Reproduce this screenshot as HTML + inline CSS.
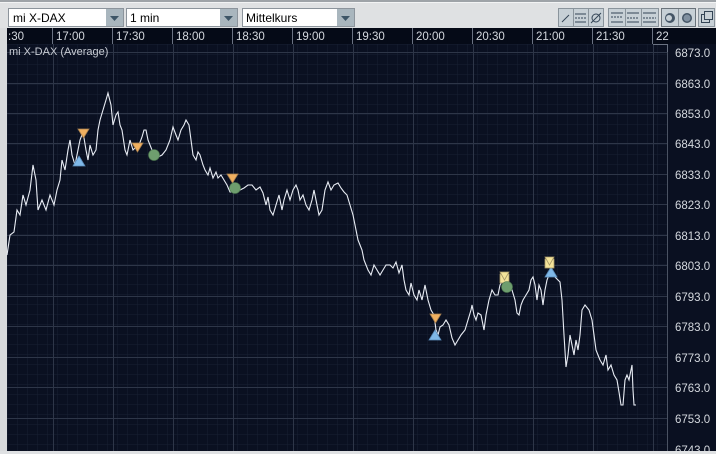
<!DOCTYPE html>
<html><head><meta charset="utf-8"><style>
html,body{margin:0;padding:0;background:#dfe1e3;}
svg{display:block}
text{font-family:"Liberation Sans",sans-serif;}
</style></head><body>
<svg width="716" height="454" viewBox="0 0 716 454" xmlns="http://www.w3.org/2000/svg">
<defs>
<pattern id="minor" x="7" y="44" width="10" height="10" patternUnits="userSpaceOnUse">
<path d="M0 0H10M0 0V10" stroke="#182033" stroke-width="1" fill="none"/>
</pattern>
</defs>
<rect width="716" height="454" fill="#dfe1e3"/>
<rect x="0" y="0" width="716" height="2" fill="#9ea3a8"/>
<rect x="0" y="2" width="716" height="1" fill="#f2f3f4"/>
<g font-size="12" fill="#000">
<rect x="8.5" y="8.5" width="115" height="18" fill="#fff" stroke="#8c949c"/>
<rect x="106" y="9" width="17" height="17" fill="#a9b6be"/>
<path d="M110 16h9l-4.5 5z" fill="#3d5566"/>
<text x="13" y="22">mi X-DAX</text>
<rect x="126.5" y="8.5" width="111" height="18" fill="#fff" stroke="#8c949c"/>
<rect x="220" y="9" width="17" height="17" fill="#a9b6be"/>
<path d="M224 16h9l-4.5 5z" fill="#3d5566"/>
<text x="130" y="22">1 min</text>
<rect x="242.5" y="8.5" width="112" height="18" fill="#fff" stroke="#8c949c"/>
<rect x="337" y="9" width="17" height="17" fill="#a9b6be"/>
<path d="M341 16h9l-4.5 5z" fill="#3d5566"/>
<text x="246" y="22">Mittelkurs</text>
</g>
<g stroke="#8a949c" fill="#c7d0d6">
<rect x="558.5" y="8.5" width="45" height="18"/>
<rect x="608.5" y="8.5" width="50" height="18"/>
<rect x="661.5" y="8.5" width="34" height="18" stroke="#6a737b"/>
<rect x="698.5" y="8.5" width="16" height="18"/>
</g>
<g stroke="#8a949c"><path d="M573.5 9v17M588.5 9v17M625.5 9v17M641.5 9v17M678.5 9v17"/></g>
<g stroke="#334455" fill="none" stroke-width="1">
<path d="M562 22l7-7"/>
<path d="M575 14h11M575 22h11"/><path d="M575 18h11" stroke-dasharray="2 1"/>
<circle cx="596" cy="18" r="4"/><path d="M591 23l10-10"/>
<path d="M611 13h12M611 22h12"/><path d="M611 17h12" stroke-dasharray="2 1"/>
<path d="M627 13h12M627 22h12" /><path d="M627 18h12" stroke-dasharray="2 1"/>
<path d="M643 13h13M643 22h13"/><path d="M643 18h13" stroke-dasharray="2 1"/>
</g>
<circle cx="670" cy="18" r="5" fill="#445566"/><circle cx="669" cy="18" r="3" fill="#c7d0d6"/>
<circle cx="687" cy="18" r="5" fill="#445566"/><circle cx="687" cy="18" r="3.5" fill="#8090a0"/>
<rect x="701.5" y="14.5" width="8" height="8" fill="#c7d0d6" stroke="#334455"/>
<rect x="704.5" y="11.5" width="8" height="8" fill="#c7d0d6" stroke="#334455"/>
<rect x="0" y="28" width="7" height="426" fill="#d8dadc"/>
<rect x="7" y="28" width="709" height="423" fill="#0a1021"/>
<rect x="7" y="44" width="660" height="407" fill="url(#minor)"/>
<g stroke="#2e3648" stroke-width="1">
<path d="M53.5 44V451M113.5 44V451M173.5 44V451M233.5 44V451M293.5 44V451M353.5 44V451M413.5 44V451M473.5 44V451M533.5 44V451M593.5 44V451M653.5 44V451"/>
<path d="M7 52.5H667M7 83.5H667M7 113.5H667M7 143.5H667M7 174.5H667M7 204.5H667M7 235.5H667M7 265.5H667M7 296.5H667M7 326.5H667M7 357.5H667M7 387.5H667M7 418.5H667"/>
</g>
<path d="M667.5 44V451" stroke="#4a5262"/>
<rect x="7" y="28" width="709" height="16" fill="#050a17"/>
<g stroke="#6a7282"><path d="M52.5 28v16M112.5 28v16M172.5 28v16M232.5 28v16M292.5 28v16M352.5 28v16M412.5 28v16M472.5 28v16M532.5 28v16M592.5 28v16M652.5 28v16"/><path d="M653 44.5h15M667.5 44v8"/></g>
<g fill="#d4d8de" font-size="11.5">
<text x="8" y="40">:30</text><text x="56" y="40">17:00</text><text x="116" y="40">17:30</text><text x="176" y="40">18:00</text><text x="236" y="40">18:30</text><text x="296" y="40">19:00</text><text x="356" y="40">19:30</text><text x="416" y="40">20:00</text><text x="476" y="40">20:30</text><text x="536" y="40">21:00</text><text x="596" y="40">21:30</text><text x="656" y="40">22</text>
</g>
<text x="9" y="55" fill="#c8ccd4" font-size="11">mi X-DAX (Average)</text>
<g fill="#d4d8de" font-size="11.5">
<text x="675" y="57">6873.0</text><text x="675" y="88">6863.0</text><text x="675" y="118">6853.0</text><text x="675" y="148">6843.0</text><text x="675" y="179">6833.0</text><text x="675" y="209">6823.0</text><text x="675" y="240">6813.0</text><text x="675" y="270">6803.0</text><text x="675" y="301">6793.0</text><text x="675" y="331">6783.0</text><text x="675" y="362">6773.0</text><text x="675" y="392">6763.0</text><text x="675" y="423">6753.0</text><text x="675" y="454">6743.0</text>
</g>
<polyline fill="none" stroke="#e8ecf4" stroke-width="1.1" points="7,255 10,235 14,232 17,210 20,215 23,195 26,205 30,190 33,165 36,180 38,210 42,200 46,210 50,195 54,205 57,190 60,180 62,160 65,170 68,150 70,140 72,155 75,165 78,150 80,140 83,132 86,150 88,160 90,145 93,155 96,150 98,130 100,120 103,110 106,100 108,93 111,105 113,125 116,115 118,112 120,125 122,130 125,150 127,155 130,140 133,150 136,147 139,145 142,137 144,130 146,130 148,140 152,150 155,155 158,157 162,155 166,150 170,140 173,127 176,135 178,140 181,130 184,125 186,120 189,125 191,140 193,155 196,160 198,152 200,155 203,165 205,170 208,175 210,168 213,178 216,172 218,178 221,175 224,180 227,185 230,192 233,192 236,185 240,190 244,188 248,185 252,185 256,190 260,187 263,193 266,205 268,197 270,210 273,215 276,205 279,195 282,210 284,200 287,190 290,200 293,190 296,185 298,190 300,200 303,195 306,205 309,210 312,200 314,190 316,200 319,215 322,210 325,190 328,182 331,190 334,185 338,183 341,188 344,192 347,195 350,205 353,215 356,230 358,240 360,245 362,250 364,260 366,265 368,270 371,275 374,265 377,270 380,275 383,270 386,265 390,265 393,268 396,262 399,273 402,265 404,280 406,290 409,295 411,283 414,295 417,300 419,290 422,300 425,285 428,300 431,310 434,315 436,330 438,335 440,327 443,325 446,320 449,325 452,338 455,345 458,340 461,335 465,330 468,320 471,310 472,305 474,315 476,320 478,313 481,315 484,330 486,315 489,300 492,290 495,295 498,295 500,285 503,280 506,283 509,285 512,290 515,300 517,313 519,315 521,305 523,300 526,295 529,290 531,280 533,277 535,285 537,300 539,285 541,290 543,305 545,290 547,280 549,275 552,270 555,277 558,280 560,282 562,300 564,335 566,367 568,355 570,335 572,345 574,355 576,340 578,350 580,335 582,310 585,305 589,310 592,320 594,335 596,350 598,355 600,360 603,365 606,355 608,370 611,365 614,375 617,380 619,392 621,405 623,405 625,380 627,375 629,380 631,370 632,365 633,390 634,405 636,405"/>
<g fill="#7fb8e8" stroke="#5a8ab8" stroke-width="0.8">
<path d="M79 156l6 10h-12z"/><path d="M435 330l6 10h-12z"/><path d="M551 267l6 10h-12z"/>
</g>
<g fill="#f0b060" stroke="#a88050" stroke-width="0.8">
<path d="M78 129h11l-5.5 9z"/><path d="M132 143h11l-5.5 9z"/><path d="M227 174h11l-5.5 9z"/><path d="M430 314h11l-5.5 9z"/>
</g>
<g fill="#f4e49a" stroke="#a89868" stroke-width="0.8">
<rect x="500" y="274" width="9" height="9"/><path d="M500 272h9l-4.5 8z"/>
<rect x="545" y="259" width="9" height="9"/><path d="M545 257h9l-4.5 8z"/>
</g>
<g fill="#6e9e6e" stroke="#4f7a50" stroke-width="0.6">
<circle cx="154" cy="155" r="5.5"/><circle cx="235" cy="188" r="5.5"/><circle cx="507" cy="287" r="5.5"/>
</g>
<rect x="0" y="451" width="716" height="3" fill="#dfe1e3"/>
</svg>
</body></html>
